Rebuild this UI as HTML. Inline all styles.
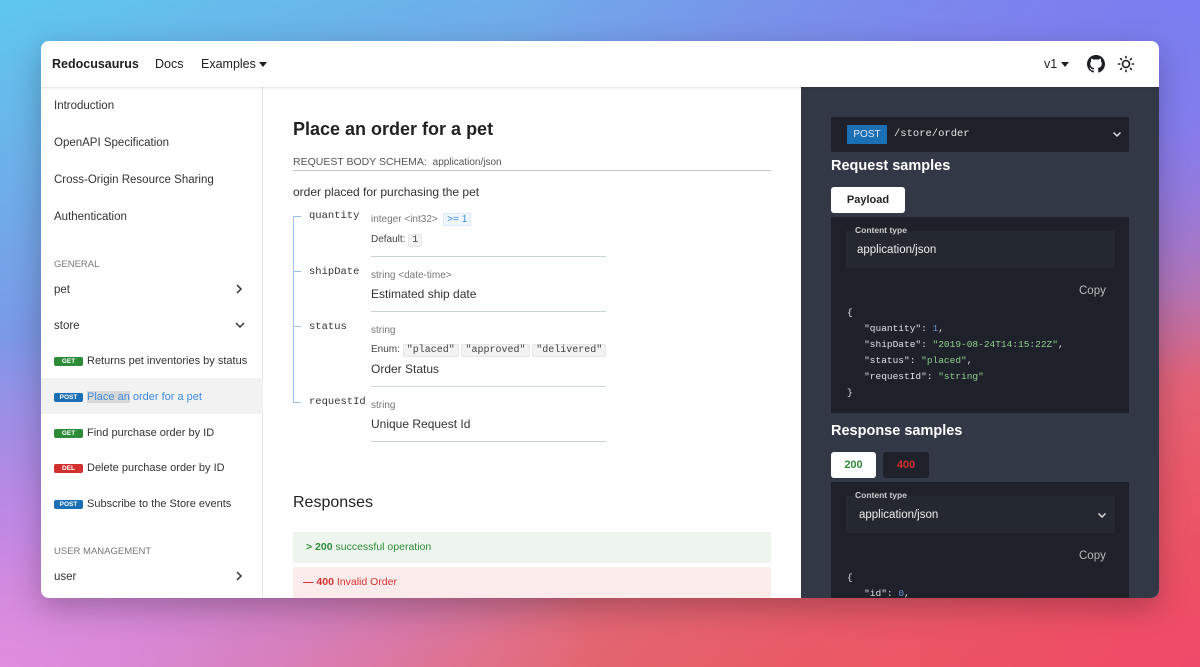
<!DOCTYPE html>
<html><head><meta charset="utf-8"><style>
*{box-sizing:border-box;margin:0;padding:0}
body{width:1200px;height:667px;overflow:hidden;font-family:"Liberation Sans",sans-serif;position:relative;
background:linear-gradient(160deg,#5ec8ee 0%,#7a9ae6 30%,#9a7ee8 50%,#e06a78 75%,#e8604a 100%);}
.bg2{position:absolute;inset:0;background:radial-gradient(ellipse at 0% 100%,#e08ee0 0%,rgba(224,142,224,0) 35%),radial-gradient(ellipse at 100% 0%,#7a7cf0 0%,rgba(122,124,240,0) 40%),radial-gradient(ellipse at 100% 100%,#f04a6a 0%,rgba(240,74,106,0) 40%)}
.win{position:absolute;left:41px;top:41px;width:1118px;height:557px;background:#fff;border-radius:8px;overflow:hidden;box-shadow:0 10px 30px rgba(0,0,0,.25)}
.a{position:absolute;white-space:nowrap}
.nav{position:absolute;left:0;top:0;width:1118px;height:46px;background:#fff;box-shadow:0 1px 2px rgba(0,0,0,.12);z-index:2}
.side{position:absolute;left:0;top:46px;width:222px;height:511px;border-right:1px solid #e3e3e3;font-size:11.5px;color:#333}
.mono{font-family:"Liberation Mono",monospace}
.badge{position:absolute;left:13px;width:29px;height:9px;border-radius:2px;color:#fff;font-size:6.5px;font-weight:bold;text-align:center;line-height:9px}
.right{position:absolute;left:760px;top:46px;width:358px;height:511px;background:#323845}
.hr{position:absolute;height:1px;background:#c9d4e0}
.code{font-size:9.5px;color:#e0e0e0}
.tag{background:#f3f3f3;border:1px solid #e6e6e6;border-radius:2px;padding:0 3px;font-family:"Liberation Mono",monospace;font-size:10px;color:#444}
</style></head><body><div class="bg2"></div>
<div class="win">
 <div class="nav">
  <div class="a" style="left:11px;top:16px;font-size:12.5px;font-weight:bold;color:#1c1e21">Redocusaurus</div>
  <div class="a" style="left:114px;top:16px;font-size:12.5px;color:#1c1e21">Docs</div>
  <div class="a" style="left:160px;top:16px;font-size:12.5px;color:#1c1e21">Examples <span style="display:inline-block;border:4px solid transparent;border-top:5px solid #1c1e21;border-bottom:0;vertical-align:middle"></span></div>
  <div class="a" style="left:1003px;top:16px;font-size:12.5px;color:#1c1e21">v1 <span style="display:inline-block;border:4px solid transparent;border-top:5px solid #1c1e21;border-bottom:0;vertical-align:middle"></span></div>
  <svg class="a" style="left:1046px;top:14px" width="18" height="18" viewBox="0 0 16 16"><path fill="#1c1e21" d="M8 0C3.58 0 0 3.58 0 8c0 3.540 2.29 6.53 5.47 7.59.4.07.55-.17.55-.38 0-.19-.01-.82-.01-1.49-2.01.37-2.53-.49-2.69-.94-.09-.23-.48-.94-.82-1.130-.28-.15-.68-.52-.01-.53.63-.01 1.08.58 1.23.82.72 1.21 1.87.87 2.33.66.07-.52.28-.87.51-1.07-1.78-.2-3.64-.89-3.64-3.95 0-.87.31-1.59.82-2.15-.08-.2-.36-1.02.08-2.12 0 0 .67-.21 2.2.82.64-.18 1.32-.27 2-.27.68 0 1.36.09 2 .27 1.53-1.04 2.2-.82 2.2-.82.44 1.1.16 1.92.08 2.12.51.56.82 1.27.82 2.15 0 3.07-1.87 3.75-3.65 3.95.29.25.54.73.54 1.48 0 1.07-.01 1.93-.01 2.2 0 .21.15.46.55.38A8.013 8.013 0 0016 8c0-4.42-3.58-8-8-8z"/></svg>
  <svg class="a" style="left:1076px;top:14px" width="18" height="18" viewBox="0 0 18 18" stroke="#1c1e21" stroke-width="1.6" fill="none" stroke-linecap="round"><circle cx="9" cy="9" r="3.5"/><path d="M9 1.5v1.2M9 15.3v1.2M1.5 9h1.2M15.3 9h1.2M3.7 3.7l.8.8M13.5 13.5l.8.8M3.7 14.3l.8-.8M13.5 4.5l.8-.8"/></svg>
 </div>
 <div class="side">
  <div class="a" style="left:13px;top:13px">Introduction</div>
  <div class="a" style="left:13px;top:50px">OpenAPI Specification</div>
  <div class="a" style="left:13px;top:87px">Cross-Origin Resource Sharing</div>
  <div class="a" style="left:13px;top:124px">Authentication</div>
  <div class="a" style="left:13px;top:172px;font-size:9.5px;color:#777">GENERAL</div>
  <div class="a" style="left:13px;top:197px">pet</div>
  <svg class="a" style="left:194px;top:196px" width="8" height="12" viewBox="0 0 8 12"><path d="M2 2l4 4-4 4" stroke="#333" stroke-width="1.5" fill="none"/></svg>
  <div class="a" style="left:13px;top:233px">store</div>
  <svg class="a" style="left:193px;top:234px" width="12" height="8" viewBox="0 0 12 8"><path d="M2 2l4 4 4-4" stroke="#333" stroke-width="1.5" fill="none"/></svg>
  <div class="badge" style="top:270px;background:#2e8b38">GET</div><div class="a" style="left:46px;top:268px;font-size:11px">Returns pet inventories by status</div>
  <div class="a" style="left:0;top:291px;width:222px;height:36px;background:#f2f2f2"></div>
  <div class="badge" style="top:306px;background:#1a6fb5">POST</div><div class="a" style="left:46px;top:304px;font-size:11px;color:#3d8be0"><span style="background:#d8d8d8">Place an</span> order for a pet</div>
  <div class="badge" style="top:342px;background:#2e8b38">GET</div><div class="a" style="left:46px;top:340px;font-size:11px">Find purchase order by ID</div>
  <div class="badge" style="top:377px;background:#d2302e">DEL</div><div class="a" style="left:46px;top:375px;font-size:11px">Delete purchase order by ID</div>
  <div class="badge" style="top:413px;background:#1a6fb5">POST</div><div class="a" style="left:46px;top:411px;font-size:11px">Subscribe to the Store events</div>
  <div class="a" style="left:13px;top:459px;font-size:9.5px;color:#777">USER MANAGEMENT</div>
  <div class="a" style="left:13px;top:484px">user</div>
  <svg class="a" style="left:194px;top:483px" width="8" height="12" viewBox="0 0 8 12"><path d="M2 2l4 4-4 4" stroke="#333" stroke-width="1.5" fill="none"/></svg>
 </div>
 <div class="a" style="left:252px;top:78px;font-size:18px;font-weight:bold;color:#222">Place an order for a pet</div>
 <div class="a" style="left:252px;top:115px;font-size:10.5px;color:#555">REQUEST BODY SCHEMA: &nbsp;<span style="font-size:10px">application/json</span></div>
 <div class="hr" style="left:252px;top:129px;width:478px;background:#ccc"></div>
 <div class="a" style="left:252px;top:144px;font-size:12px;color:#333">order placed for purchasing the pet</div>
 <div class="a" style="left:252px;top:175px;width:1px;height:186px;background:#9cc3eb"></div>
 <div class="a" style="left:252px;top:175px;width:8px;height:1px;background:#9cc3eb"></div>
 <div class="a" style="left:252px;top:230px;width:8px;height:1px;background:#9cc3eb"></div>
 <div class="a" style="left:252px;top:285px;width:8px;height:1px;background:#9cc3eb"></div>
 <div class="a" style="left:252px;top:361px;width:8px;height:1px;background:#9cc3eb"></div>
 <div class="a mono" style="left:268px;top:169px;font-size:10.5px;color:#333">quantity</div>
 <div class="a" style="left:330px;top:173px;font-size:10px;color:#777">integer &lt;int32&gt; &nbsp;<span style="color:#3d8be0;background:#eef5fd;border:1px solid #dceafa;padding:0 3px">&gt;= 1</span></div>
 <div class="a" style="left:330px;top:193px;font-size:10px;color:#444">Default: <span class="tag">1</span></div>
 <div class="hr" style="left:330px;top:215px;width:235px"></div>
 <div class="a mono" style="left:268px;top:225px;font-size:10.5px;color:#333">shipDate</div>
 <div class="a" style="left:330px;top:229px;font-size:10px;color:#777">string &lt;date-time&gt;</div>
 <div class="a" style="left:330px;top:246px;font-size:12px;color:#333">Estimated ship date</div>
 <div class="hr" style="left:330px;top:270px;width:235px"></div>
 <div class="a mono" style="left:268px;top:280px;font-size:10.5px;color:#333">status</div>
 <div class="a" style="left:330px;top:284px;font-size:10px;color:#777">string</div>
 <div class="a" style="left:330px;top:303px;font-size:10px;color:#444">Enum: <span class="tag">"placed"</span> <span class="tag">"approved"</span> <span class="tag">"delivered"</span></div>
 <div class="a" style="left:330px;top:321px;font-size:12px;color:#333">Order Status</div>
 <div class="hr" style="left:330px;top:345px;width:235px"></div>
 <div class="a mono" style="left:268px;top:355px;font-size:10.5px;color:#333">requestId</div>
 <div class="a" style="left:330px;top:359px;font-size:10px;color:#777">string</div>
 <div class="a" style="left:330px;top:376px;font-size:12px;color:#333">Unique Request Id</div>
 <div class="hr" style="left:330px;top:400px;width:235px"></div>
 <div class="a" style="left:252px;top:453px;font-size:16px;color:#222">Responses</div>
 <div class="a" style="left:252px;top:491px;width:478px;height:31px;background:#eef5ef;border-radius:2px"></div>
 <div class="a" style="left:265px;top:500px;font-size:10.5px;color:#2e8b38"><b>&gt; 200</b> successful operation</div>
 <div class="a" style="left:252px;top:526px;width:478px;height:40px;background:#fbeceb;border-radius:2px"></div>
 <div class="a" style="left:262px;top:535px;font-size:10.5px;color:#d2302e"><b>— 400</b> Invalid Order</div>
 <div class="right">
  <div class="a" style="left:30px;top:30px;width:298px;height:35px;background:#1e2129;border-radius:2px"></div>
  <div class="a" style="left:46px;top:38px;width:40px;height:19px;background:#1a6fb5;color:#dfe8f2;font-size:10px;text-align:center;line-height:19px">POST</div>
  <div class="a mono" style="left:93px;top:41px;font-size:10.5px;color:#e5e5e5">/store/order</div>
  <svg class="a" style="left:311px;top:44px" width="10" height="7" viewBox="0 0 10 7"><path d="M1.5 1.5l3.5 3.5 3.5-3.5" stroke="#ddd" stroke-width="1.5" fill="none"/></svg>
  <div class="a" style="left:30px;top:71px;font-size:14.5px;font-weight:bold;color:#fff">Request samples</div>
  <div class="a" style="left:30px;top:100px;width:74px;height:26px;background:#fff;border-radius:3px;font-size:11px;font-weight:bold;text-align:center;line-height:26px;color:#222">Payload</div>
  <div class="a" style="left:30px;top:130px;width:298px;height:196px;background:#1e2129"></div>
  <div class="a" style="left:45px;top:144px;width:269px;height:37px;background:#242830"></div>
  <div class="a" style="left:54px;top:138px;font-size:8.5px;font-weight:bold;color:#ccc">Content type</div>
  <div class="a" style="left:56px;top:157px;font-size:11.5px;color:#eee">application/json</div>
  <div class="a" style="left:278px;top:198px;font-size:11.5px;color:#bbb">Copy</div>
  <div class="a mono code" style="left:46px;top:218px;line-height:16px">{<br>&nbsp;&nbsp;&nbsp;"quantity": <span style="color:#6b8fd4">1</span>,<br>&nbsp;&nbsp;&nbsp;"shipDate": <span style="color:#8ed18a">"2019-08-24T14:15:22Z"</span>,<br>&nbsp;&nbsp;&nbsp;"status": <span style="color:#8ed18a">"placed"</span>,<br>&nbsp;&nbsp;&nbsp;"requestId": <span style="color:#8ed18a">"string"</span><br>}</div>
  <div class="a" style="left:30px;top:336px;font-size:14.5px;font-weight:bold;color:#fff">Response samples</div>
  <div class="a" style="left:30px;top:365px;width:45px;height:26px;background:#fff;border-radius:3px;font-size:11px;font-weight:bold;text-align:center;line-height:26px;color:#2e8b38">200</div>
  <div class="a" style="left:82px;top:365px;width:46px;height:26px;background:#1e2129;border-radius:3px;font-size:11px;font-weight:bold;text-align:center;line-height:26px;color:#d2302e">400</div>
  <div class="a" style="left:30px;top:395px;width:298px;height:120px;background:#1e2129"></div>
  <div class="a" style="left:45px;top:409px;width:269px;height:37px;background:#242830"></div>
  <div class="a" style="left:54px;top:403px;font-size:8.5px;font-weight:bold;color:#ccc">Content type</div>
  <div class="a" style="left:58px;top:422px;font-size:11.5px;color:#eee">application/json</div>
  <svg class="a" style="left:296px;top:425px" width="10" height="7" viewBox="0 0 10 7"><path d="M1.5 1.5l3.5 3.5 3.5-3.5" stroke="#ddd" stroke-width="1.5" fill="none"/></svg>
  <div class="a" style="left:278px;top:463px;font-size:11.5px;color:#bbb">Copy</div>
  <div class="a mono code" style="left:46px;top:483px;line-height:16px">{<br>&nbsp;&nbsp;&nbsp;"id": <span style="color:#6b8fd4">0</span>,</div>
 </div>
</div>
</body></html>
